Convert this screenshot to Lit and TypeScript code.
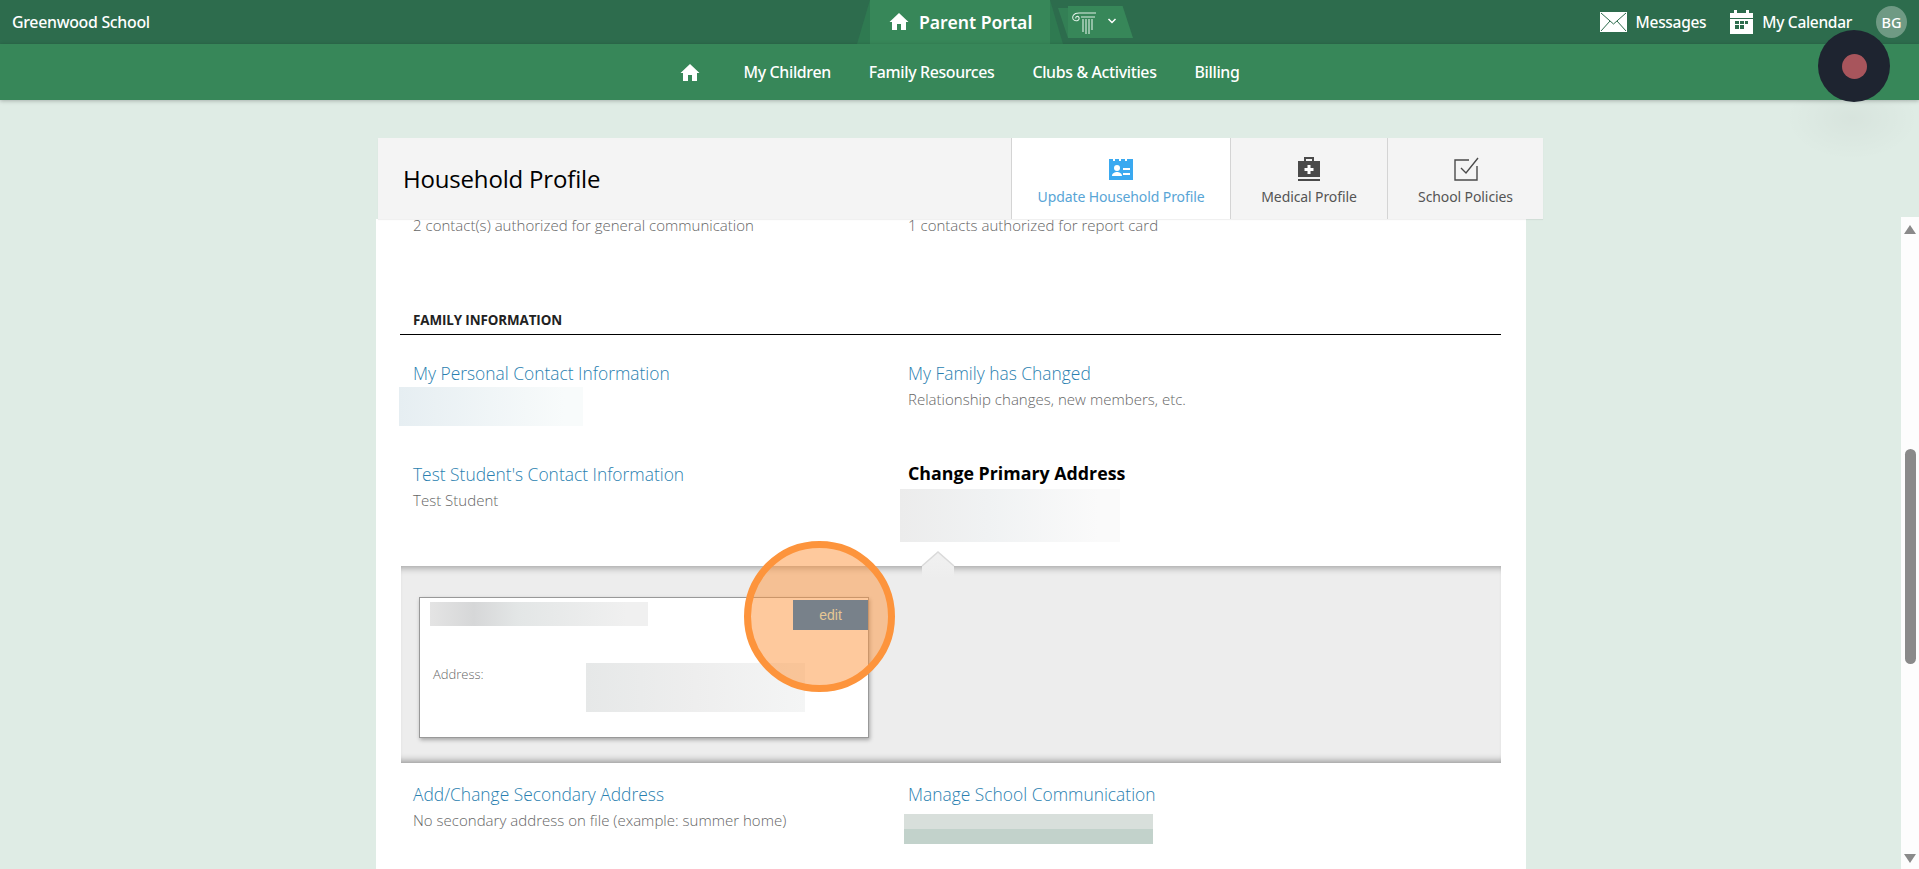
import { LitElement, html, css, svg } from "lit";
import { customElement } from "lit/decorators.js";

const HOME = svg`<path d="M10 1 L0.5 10 H3 V18 H8 V12 H12 V18 H17 V10 H19.5 Z" fill="#fff"/>`;

@customElement("app-root")
export class AppRoot extends LitElement {
  static styles = css`
    :host { display: block; width: 1919px; height: 869px; overflow: hidden; position: relative; background: #dfece5; font-family: "Noto Sans", sans-serif; }
    * { box-sizing: border-box; }
    .top { height: 44px; background: #2d6c4d; display: grid; grid-template-columns: 870px auto 1fr; align-items: center; color: #fff; }
    .school { padding-left: 12px; font-size: 15.9px; font-weight: 500; letter-spacing: -0.3px; }
    .center { display: flex; height: 44px; }
    .portal { width: 180px; height: 44px; background: #378759; display: flex; align-items: center; gap: 10px; padding-left: 19px; font-size: 17.6px; font-weight: 600; position: relative; }
    .portal svg { width: 20px; height: 19px; margin-top: -2px; }
    .portal::before, .portal::after { content: ""; position: absolute; top: 0; bottom: 0; width: 13px; background: #2f7a51; }
    .portal::before { left: -13px; clip-path: polygon(100% 0, 100% 100%, 0 100%); }
    .portal::after { right: -13px; clip-path: polygon(0 0, 100% 100%, 0 100%); }
    .logowrap { position: relative; margin: 6px 0 0 18px; height: 32px; }
    .logowrap::before { content: ""; position: absolute; left: -10px; top: 2px; bottom: 0; width: 10px; background: #337f55; clip-path: polygon(0 0, 100% 100%, 100% 0); }
    .logo { width: 65px; height: 32px; background: #378759; clip-path: polygon(0 0, 84% 0, 100% 100%, 0 100%); display: flex; align-items: center; padding-left: 2px; gap: 9px; }
    .logo svg { width: 28px; height: 28px; flex: none; }
    .logo .chev { width: 10px; height: 8px; margin-top: -2px; }
    .right { display: flex; justify-content: flex-end; align-items: center; font-size: 15.5px; letter-spacing: -0.3px; font-weight: 500; padding-right: 12px; }
    .right .item { display: flex; align-items: center; gap: 9px; margin-right: 24px; }
    .avatar { width: 31px; height: 32px; border-radius: 50%; background: #6f9a84; display: flex; align-items: center; justify-content: center; font-size: 14.5px; letter-spacing: 0; }
    .nav { height: 56px; background: #378759; display: flex; justify-content: center; align-items: center; color: #fff; font-size: 15.9px; font-weight: 500; letter-spacing: -0.35px; box-shadow: 0 1px 4px rgba(0,0,0,.25); position: relative; }
    .nav svg { width: 20px; height: 19px; margin-right: 44px; }
    .nav span { margin-right: 38px; }
    .nav span:last-child { margin-right: 0; }
    .stage { width: 1919px; height: 769px; padding-top: 38px; }
    .head { margin-left: 378px; width: 1165px; height: 81px; background: #f4f4f4; display: flex; position: relative; z-index: 2; box-shadow: 0 1px 1px rgba(0,0,0,.06); }
    .head h1 { flex: 1; margin: 0; font: 400 24px "Open Sans", sans-serif; color: #000; padding: 24px 0 0 25px; letter-spacing: -0.18px; line-height: 34px; }
    .tab { border-left: 1px solid #d4d4d4; display: flex; flex-direction: column; align-items: center; font-size: 14px; color: #555; padding-top: 18px; letter-spacing: -0.1px; flex: none; }
    .tab svg { width: 26px; height: 26px; margin-bottom: 5px; }
    .tab.a { width: 219px; background: #fff; color: #58a5d6; margin-left: -1px; }
    .tab.b { width: 157px; }
    .tab.c { width: 156px; }
    .column { width: 1150px; height: 650px; margin-left: 376px; background: #fff; }
    .body { font-family: "Open Sans", sans-serif; font-weight: 300; }
    .sub { font-size: 15px; color: #666; line-height: 24px; letter-spacing: 0.02px; margin-top: 2px; }
    .link { font-size: 17.4px; color: #2a7fb0; line-height: 24px; }
    .link.on { color: #000; font-weight: 700; font-size: 17.8px; margin-top: -1px; }
    .row { display: grid; grid-template-columns: 495px 1fr; padding-left: 37px; }
    .r0 { height: 87px; }
    .r0 .sub { margin-top: 0; line-height: 12px; }
    .fam { margin: 0 25px 0 24px; height: 29px; border-bottom: 1px solid #000; padding-left: 13px; font: 700 13.4px "Open Sans", sans-serif; color: #222; line-height: 28px; letter-spacing: -0.1px; text-transform: uppercase; }
    .r1 { margin-top: 26px; height: 101px; }
    .r2 { height: 104px; }
    .b1 { width: 184px; height: 39px; margin: 2px 0 0 -14px; background: linear-gradient(90deg, #e6eef2, #f8fbfb 90%); }
    .b2 { width: 220px; height: 53px; margin: 4px 0 0 -8px; background: linear-gradient(90deg, #ececec, #f0f2f3 40%, #fafafa 90%); }
    .panel { margin: 0 25px; height: 197px; background: #ededed; box-shadow: inset 0 8px 7px -6px rgba(0,0,0,.32), inset 0 -8px 7px -6px rgba(0,0,0,.38); padding: 31px 0 0 18px; position: relative; }
    .arrow { position: absolute; left: 515px; top: -15px; width: 44px; height: 28px; display: block; }
    .card { width: 450px; height: 141px; background: #fff; border: 1px solid #999; box-shadow: 1px 2px 4px rgba(0,0,0,.3); position: relative; }
    .cb1 { position: absolute; left: 10px; top: 4px; width: 218px; height: 24px; background: linear-gradient(90deg, #e4e4e4, #d6d7d8 20%, #e3e6e6 40%, #f0f0f0 90%); }
    .edit { position: absolute; right: 0; top: 2px; width: 75px; height: 30px; background: #78818a; color: #e6c794; font: 400 14px "Liberation Sans", sans-serif; display: flex; align-items: center; justify-content: center; z-index: 5; }
    .addr { position: absolute; left: 13px; top: 67px; font-size: 13px; color: #666; font-weight: 300; }
    .cb2 { position: absolute; left: 166px; top: 65px; width: 219px; height: 49px; background: linear-gradient(90deg, #e6e8e8, #eeeeee 50%, #f4f5f5); }
    .r3 { margin-top: 19px; }
    .b3 { width: 249px; height: 30px; margin: 8px 0 0 -4px; background: linear-gradient(180deg, #d8dfdb 50%, #c2d2cb 50%); }
    .scrollbar { position: absolute; left: 1901px; top: 217px; width: 18px; height: 652px; background: #fdfdfd; }
    .up, .down { position: absolute; left: 3px; width: 0; height: 0; border-left: 6.5px solid transparent; border-right: 6.5px solid transparent; }
    .up { top: 8px; border-bottom: 9px solid #8a8a8a; }
    .down { bottom: 6px; border-top: 9px solid #8a8a8a; }
    .thumb { position: absolute; left: 4px; top: 232px; width: 11px; height: 215px; border-radius: 6px; background: #8a8a8a; }
    .ring { position: absolute; left: 744px; top: 541px; width: 151px; height: 151px; border-radius: 50%; border: 7px solid #fd943c; background: rgba(253,148,60,.5); z-index: 3; }
    .rec { position: absolute; left: 1818px; top: 30px; width: 72px; height: 72px; border-radius: 50%; background: #1e2430; z-index: 4; display: flex; align-items: center; justify-content: center; }
    .rec i { width: 25px; height: 25px; border-radius: 50%; background: #a8555c; }
    .glow { position: absolute; left: 1785px; top: 100px; width: 134px; height: 60px; background: radial-gradient(ellipse at 50% 30%, rgba(0,0,0,.035), transparent 70%); }
  `;

  render() {
    return html`
      <div class="top">
        <div class="school">Greenwood School</div>
        <div class="center">
          <div class="portal"><svg viewBox="0 0 20 19">${HOME}</svg>Parent Portal</div>
          <div class="logowrap"><div class="logo">
            <svg viewBox="0 0 28 28" fill="none" stroke="#dff0e6" stroke-width="1.1">
              <path d="M26 5 H9 C3 5 2 9 3 11 C5 14 10 13 9 9.5 C8 7.5 5 8.5 6 10.5"/>
              <path d="M11 9 H25 M13 11 V24 M16 11 V26 M19 11 V26 M22 11 V22"/>
            </svg>
            <svg class="chev" viewBox="0 0 10 8" fill="none" stroke="#fff" stroke-width="1.5"><path d="M1.5 2 L5 5.5 L8.5 2"/></svg>
          </div></div>
        </div>
        <div class="right">
          <div class="item">
            <svg width="27" height="20" viewBox="0 0 27 20"><rect width="27" height="20" fill="#fff"/><path d="M1 1 L13.5 12 L26 1 M1 19 L10 9 M26 19 L17 9" fill="none" stroke="#2d6c4d" stroke-width="1"/></svg>
            Messages
          </div>
          <div class="item">
            <svg width="23" height="24" viewBox="0 0 23 24"><path fill="#fff" d="M0 3H4V0H7V3H16V0H19V3H23V24H0Z"/><path fill="#2d6c4d" d="M0 8H23V9H0Z"/><path fill="#2d6c4d" d="M5 11h4v3H5zM10 11h4v3h-4zM15 11h3v3h-3zM5 15h4v4H5zM10 15h4v4h-4z"/></svg>
            My Calendar
          </div>
          <div class="avatar">BG</div>
        </div>
      </div>
      <div class="nav">
        <svg viewBox="0 0 20 19">${HOME}</svg>
        <span>My Children</span><span>Family Resources</span><span>Clubs &amp; Activities</span><span>Billing</span>
      </div>
      <div class="stage">
        <div class="head">
          <h1>Household Profile</h1>
          <div class="tab a">
            <svg viewBox="0 0 26 26"><path fill="#3aa9f0" d="M1 3H5V5H7V3H11V5H13V3H17V5H19V3H25V24H1Z"/><circle cx="9" cy="12" r="3" fill="#fff"/><path fill="#fff" d="M4 20c0-3 3-4 5-4s5 1 5 4zM15 12h7v2h-7zM15 17h7v2h-7z"/></svg>
            Update Household Profile
          </div>
          <div class="tab b">
            <svg viewBox="0 0 26 26"><path fill="#4a4a4a" d="M2 5H8V1H18V5H24V21H2ZM10 3V5H16V3ZM2 23H24V25H2Z"/><path fill="#fff" d="M11.5 9h3v3h3v3h-3v3h-3v-3h-3v-3h3z"/></svg>
            Medical Profile
          </div>
          <div class="tab c">
            <svg viewBox="0 0 26 26" fill="none" stroke="#4a4a4a" stroke-width="1.4"><path d="M16 4H2V24H24V10"/><path d="M8 12L13 17L25 2"/></svg>
            School Policies
          </div>
        </div>
        <div class="column">
          <div class="body">
            <div class="row r0"><div class="sub">2 contact(s) authorized for general communication</div><div class="sub">1 contacts authorized for report card</div></div>
            <div class="fam">Family Information</div>
            <div class="row r1">
              <div><div class="link">My Personal Contact Information</div><div class="b1"></div></div>
              <div><div class="link">My Family has Changed</div><div class="sub">Relationship changes, new members, etc.</div></div>
            </div>
            <div class="row r2">
              <div><div class="link">Test Student's Contact Information</div><div class="sub">Test Student</div></div>
              <div><div class="link on">Change Primary Address</div><div class="b2"></div></div>
            </div>
            <div class="panel">
              <svg class="arrow" viewBox="0 0 44 28">
                <defs><linearGradient id="ag" x1="0" y1="0" x2="0" y2="1"><stop offset="0" stop-color="#f1f1f1"/><stop offset="1" stop-color="#ededed"/></linearGradient></defs>
                <path d="M6 15 L22 1 L38 15 L38 28 L6 28 Z" fill="url(#ag)"/>
                <path d="M6 15 L22 1 L38 15" fill="none" stroke="#dadada" stroke-width="1.5"/>
              </svg>
              <div class="card">
                <div class="cb1"></div>
                <div class="edit">edit</div>
                <div class="addr">Address:</div>
                <div class="cb2"></div>
              </div>
            </div>
            <div class="row r3">
              <div><div class="link">Add/Change Secondary Address</div><div class="sub">No secondary address on file (example: summer home)</div></div>
              <div><div class="link">Manage School Communication</div><div class="b3"></div></div>
            </div>
          </div>
        </div>
      </div>
      <div class="scrollbar"><div class="up"></div><div class="thumb"></div><div class="down"></div></div>
      <div class="glow"></div>
      <div class="ring"></div>
      <div class="rec"><i></i></div>
    `;
  }
}
